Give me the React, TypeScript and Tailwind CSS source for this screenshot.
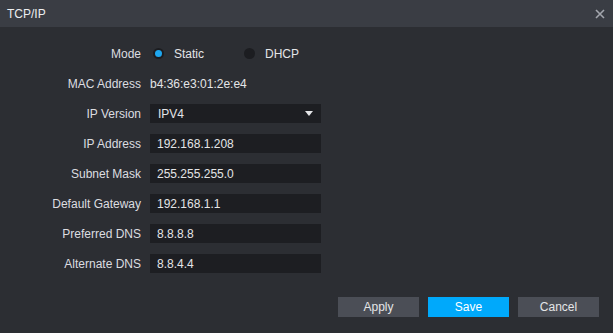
import React, { useState } from 'react';

const fields = [
  { label: 'IP Address', value: '192.168.1.208' },
  { label: 'Subnet Mask', value: '255.255.255.0' },
  { label: 'Default Gateway', value: '192.168.1.1' },
  { label: 'Preferred DNS', value: '8.8.8.8' },
  { label: 'Alternate DNS', value: '8.8.4.4' },
];

const Radio: React.FC<{ checked: boolean; label: string; onClick: () => void }> = ({ checked, label, onClick }) => (
  <button onClick={onClick} className="flex items-center gap-[10px] text-[#e4e5e7]">
    <span className="flex h-[11px] w-[11px] items-center justify-center rounded-full bg-[#1c1d21]">
      {checked && <span className="h-[7px] w-[7px] rounded-full bg-[#1ea7f0]" />}
    </span>
    {label}
  </button>
);

export default function App() {
  const [mode, setMode] = useState<'static' | 'dhcp'>('static');

  return (
    <div className="flex h-[333px] w-[613px] flex-col bg-[#2c2e33] text-[12px] text-[#dcdde0]" style={{ fontFamily: '"Liberation Sans", Arial, sans-serif' }}>
      {/* Title bar */}
      <div className="flex h-[27px] items-center justify-between bg-[#3a3d44] pl-[7px] pr-[8px]">
        <span className="text-[#eceef0]">TCP/IP</span>
        <svg width="10" height="10" viewBox="0 0 10 10" className="text-[#a3a6ad]">
          <path d="M1 1L9 9M9 1L1 9" stroke="currentColor" strokeWidth="1.6" />
        </svg>
      </div>

      {/* Form */}
      <div className="grid grid-cols-[141px_171px] items-center gap-x-[9px] gap-y-[11px] pt-[17px]">
        <span className="text-right">Mode</span>
        <div className="flex h-[19px] items-center gap-[40px] pl-[3px]">
          <Radio checked={mode === 'static'} label="Static" onClick={() => setMode('static')} />
          <Radio checked={mode === 'dhcp'} label="DHCP" onClick={() => setMode('dhcp')} />
        </div>

        <span className="text-right">MAC Address</span>
        <span className="flex h-[19px] items-center text-[#e4e5e7]">b4:36:e3:01:2e:e4</span>

        <span className="text-right">IP Version</span>
        <div className="flex h-[19px] items-center justify-between bg-[#1d1e22] pl-[8px] pr-[8px] text-[#e4e5e7]">
          <span>IPV4</span>
          <svg width="8" height="5" viewBox="0 0 8 5">
            <path d="M0 0H8L4 5Z" fill="#e4e5e7" />
          </svg>
        </div>

        {fields.map((f) => (
          <React.Fragment key={f.label}>
            <span className="text-right">{f.label}</span>
            <input
              defaultValue={f.value}
              className="h-[19px] bg-[#1d1e22] pl-[7px] text-[12px] text-[#e4e5e7] outline-none"
            />
          </React.Fragment>
        ))}
      </div>

      {/* Buttons */}
      <div className="mt-auto flex justify-end gap-[9px] pb-[16px] pr-[14px]">
        <button className="h-[20px] w-[81px] bg-[#4b4e56] text-[#e4e5e7]">Apply</button>
        <button className="h-[20px] w-[81px] bg-[#00a9fb] text-white">Save</button>
        <button className="h-[20px] w-[81px] bg-[#4b4e56] text-[#e4e5e7]">Cancel</button>
      </div>
    </div>
  );
}
